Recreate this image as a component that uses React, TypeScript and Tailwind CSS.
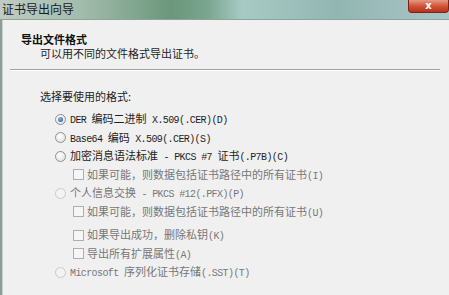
import React from "react";

type Part = string | { m: string };

interface Opt {
  kind: "radio" | "check";
  parts: Part[];
  checked?: boolean;
  disabled?: boolean;
  gapAbove?: boolean;
}

const options: Opt[] = [
  { kind: "radio", checked: true, parts: [{ m: "DER " }, "编码二进制", { m: " X.509(.CER)(D)" }] },
  { kind: "radio", parts: [{ m: "Base64 " }, "编码", { m: " X.509(.CER)(S)" }] },
  { kind: "radio", parts: ["加密消息语法标准", { m: " - PKCS #7 " }, "证书", { m: "(.P7B)(C)" }] },
  { kind: "check", disabled: true, parts: ["如果可能，则数据包括证书路径中的所有证书", { m: "(I)" }] },
  { kind: "radio", disabled: true, parts: ["个人信息交换", { m: " - PKCS #12(.PFX)(P)" }] },
  { kind: "check", disabled: true, parts: ["如果可能，则数据包括证书路径中的所有证书", { m: "(U)" }] },
  { kind: "check", disabled: true, gapAbove: true, parts: ["如果导出成功，删除私钥", { m: "(K)" }] },
  { kind: "check", disabled: true, parts: ["导出所有扩展属性", { m: "(A)" }] },
  { kind: "radio", disabled: true, parts: [{ m: "Microsoft " }, "序列化证书存储", { m: "(.SST)(T)" }] },
];

const Radio: React.FC<{ checked?: boolean; disabled?: boolean }> = ({ checked, disabled }) => (
  <span
    className={
      disabled
        ? "w-[11px] h-[11px] shrink-0 rounded-full border border-[#c9c9c9] bg-[#f3f3f3]"
        : "w-[11px] h-[11px] shrink-0 rounded-full border border-[#8d9091] bg-[radial-gradient(circle_at_40%_35%,#ffffff,#d9dbdc)] flex items-center justify-center"
    }
  >
    {checked && (
      <span className="w-[5px] h-[5px] rounded-full bg-[radial-gradient(circle_at_40%_35%,#7fb6ee,#1f4f8e)]" />
    )}
  </span>
);

const Check: React.FC = () => (
  <span className="w-[11px] h-[11px] shrink-0 border border-[#aeaeae] bg-[#f6f6f6]" />
);

const Row: React.FC<{ opt: Opt }> = ({ opt }) => (
  <div
    className={
      "h-[18.5px] flex items-center whitespace-nowrap text-[11px] " +
      (opt.kind === "radio" ? "pl-[52px] gap-[4px] " : "pl-[70px] gap-[3px] ") +
      (opt.gapAbove ? "mt-[5px] " : "") +
      (opt.disabled ? "text-[#777777]" : "text-[#1e1e1e]")
    }
  >
    {opt.kind === "radio" ? <Radio checked={opt.checked} disabled={opt.disabled} /> : <Check />}
    <span>
      {opt.parts.map((p, i) =>
        typeof p === "string" ? (
          <span key={i} className="whitespace-pre">{p}</span>
        ) : (
          <span key={i} className="font-['Liberation_Mono',monospace] text-[10px] tracking-[-0.6px] whitespace-pre">
            {p.m}
          </span>
        )
      )}
    </span>
  </div>
);

export default function App() {
  return (
    <div className="w-[449px] h-[295px] overflow-hidden flex flex-col bg-[#f0f0f0] font-['Noto_Sans_CJK_SC','Noto_Sans',sans-serif]">
      <div className="h-[20px] shrink-0 flex justify-between items-start border-b border-[#8ea39b] bg-[linear-gradient(90deg,#bfccc4_0%,#a3bcad_18%,#6b977b_38%,#79a48e_46%,#a8cac5_54%,#92b6b2_75%,#a9c5c6_100%)]">
        <span className="pl-[2px] pt-[1px] text-[12px] leading-[15px] text-[#1a1a1a]">证书导出向导</span>
        <div className="w-[41px] h-[13px] flex items-center justify-center rounded-b-[4px] border border-t-0 border-[#7a2416] bg-[linear-gradient(180deg,#e69a82_0%,#d0553a_50%,#b8321b_100%)] text-white text-[10px] font-bold leading-none font-['DejaVu_Sans',sans-serif]">
          x
        </div>
      </div>
      <div className="flex flex-1">
        <div className="w-[3px] shrink-0 bg-[#8a9d96] border-r border-[#c9d3cf]" />
        <div className="flex-1 flex flex-col">
          <div className="pl-[18px] pt-[12px]">
            <div className="text-[11px] leading-[14px] font-bold text-[#111]">导出文件格式</div>
            <div className="pl-[19px] text-[11px] leading-[14px] text-[#1e1e1e]">可以用不同的文件格式导出证书。</div>
          </div>
          <div className="mt-[9px] ml-[7px] mr-[9px]">
            <div className="h-px bg-[#a3a3a3]" />
            <div className="h-px bg-white" />
          </div>
          <div className="pl-[37px] mt-[18px] text-[11px] leading-[14px] text-[#1e1e1e]">选择要使用的格式:</div>
          <div className="mt-[7px] flex flex-col">
            {options.map((o, i) => (
              <Row key={i} opt={o} />
            ))}
          </div>
        </div>
      </div>
    </div>
  );
}
